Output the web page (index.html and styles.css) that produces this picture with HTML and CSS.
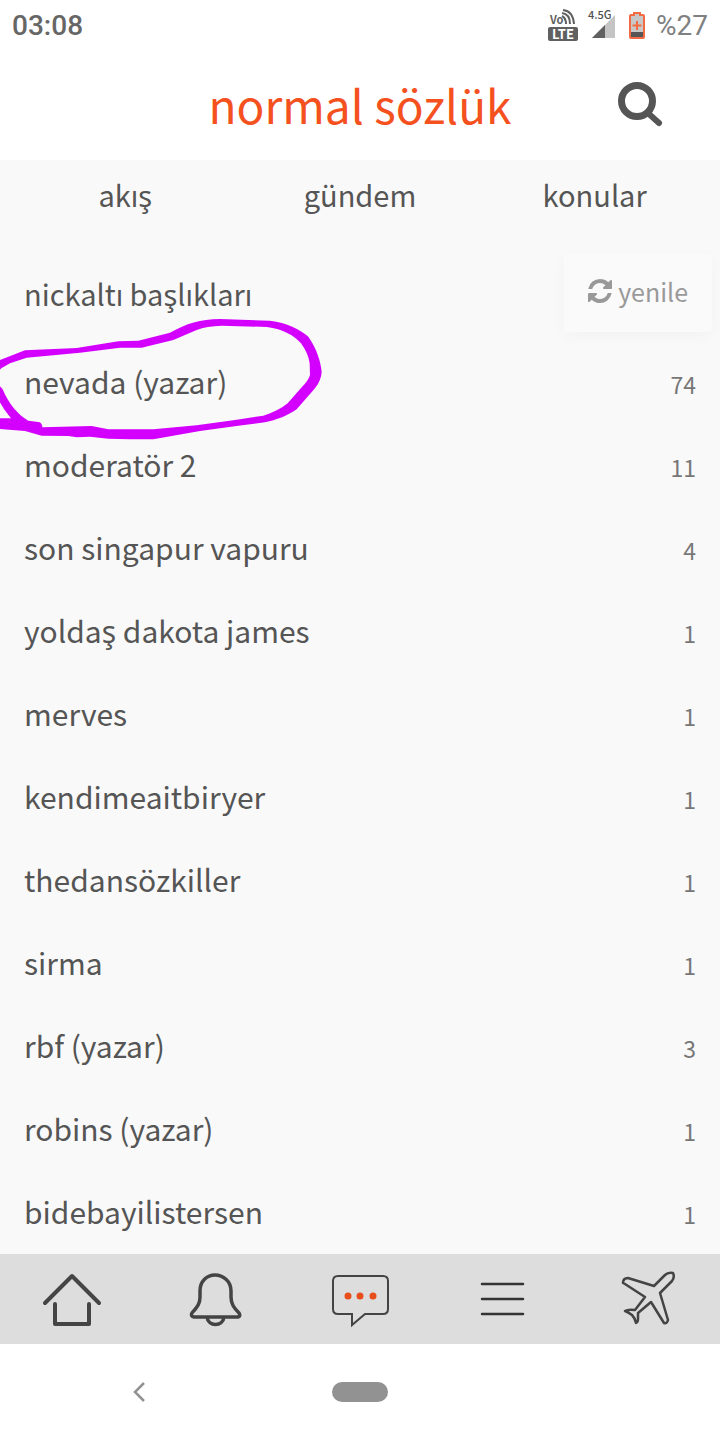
FILE: index.html
```html
<!DOCTYPE html>
<html lang="tr">
<head>
<meta charset="utf-8">
<meta name="viewport" content="width=device-width, initial-scale=1">
<title>normal sözlük</title>
<link rel="stylesheet" href="styles.css">
</head>
<body>
<div class="status">
  <span class="clock">03:08</span>
  <div class="indicators">
    <svg class="volte" width="30" height="32" viewBox="0 0 30 32" aria-label="VoLTE">
      <rect x="0" y="17" width="30" height="14" rx="2" fill="#606060"/>
      <text x="15" y="29" text-anchor="middle" font-size="13" font-weight="700" fill="#fff">LTE</text>
      <text x="2" y="14" font-size="11" font-weight="700" fill="#606060">Vo</text>
      <path d="M14 6q4 2 4 8M14 3q8 1 8 11M15 0q10 1 11 14" fill="none" stroke="#606060" stroke-width="2"/>
    </svg>
    <svg class="signal" width="28" height="32" viewBox="0 0 28 32" aria-label="4.5G">
      <path d="M27 5v23H4z" fill="#c4c4c4"/><path d="M17 15v13H4z" fill="#606060"/>
      <text x="0" y="9" font-size="11" font-weight="500" fill="#505050">4.5G</text>
    </svg>
    <svg class="battery" width="18" height="30" viewBox="0 0 18 30" aria-label="Pil">
      <path d="M3 4h3V2h6v2h3q1 0 1 1v21q0 1-1 1H3q-1 0-1-1V5q0-1 1-1z" fill="#c8c8c8" stroke="#f36b42" stroke-width="2"/>
      <path d="M3 21h12v5H3z" fill="#555"/><path d="M9 10v9M4.500 14.500h9" stroke="#f36b42" stroke-width="2"/>
    </svg>
    <span class="percent">%27</span>
  </div>
</div>
<header class="header">
  <h1 class="brand">normal sözlük</h1>
  <button class="search" type="button" aria-label="ara">
    <svg width="46" height="46" viewBox="0 0 46 46" fill="none" stroke="#555"><circle cx="20" cy="19" r="15.500" stroke-width="7"/><path d="M32 32l10 9" stroke-width="6" stroke-linecap="round"/></svg>
  </button>
</header>
<main class="content">
  <nav class="tabs"><a href="#akis">akış</a><a href="#gundem">gündem</a><a href="#konular">konular</a></nav>
  <div class="heading">
    <h2>nickaltı başlıkları</h2>
    <button class="refresh" type="button">
      <svg width="24" height="24" viewBox="0 0 1536 1536" fill="#999" aria-hidden="true"><path d="M1511 928q0 5-1 7-64 268-268 434.500T764 1536q-146 0-282.500-55T238 1324l-129 129q-19 19-45 19t-45-19-19-45V960q0-26 19-45t45-19h448q26 0 45 19t19 45-19 45l-137 137q71 66 161 102t187 36q134 0 250-65t186-179q11-17 53-117 8-23 30-23h192q13 0 22.500 9.500t9.500 22.500zm25-800v448q0 26-19 45t-45 19h-448q-26 0-45-19t-19-45 19-45l138-138Q969 256 768 256q-134 0-250 65T332 500q-11 17-53 117-8 23-30 23H50q-13 0-22.500-9.500T18 608v-7q65-268 270-434.500T768 0q146 0 284 55.500T1297 212l130-129q19-19 45-19t45 19 19 45z"/></svg>
      <span>yenile</span>
    </button>
  </div>
  <ul class="topics">
    <li><a href="#1">nevada (yazar)<small>74</small></a></li>
    <li><a href="#2">moderatör 2<small>11</small></a></li>
    <li><a href="#3">son singapur vapuru<small>4</small></a></li>
    <li><a href="#4">yoldaş dakota james<small>1</small></a></li>
    <li><a href="#5">merves<small>1</small></a></li>
    <li><a href="#6">kendimeaitbiryer<small>1</small></a></li>
    <li><a href="#7">thedansözkiller<small>1</small></a></li>
    <li><a href="#8">sirma<small>1</small></a></li>
    <li><a href="#9">rbf (yazar)<small>3</small></a></li>
    <li><a href="#10">robins (yazar)<small>1</small></a></li>
    <li><a href="#11">bidebayilistersen<small>1</small></a></li>
  </ul>
  <svg class="scribble" width="340" height="140" viewBox="0 0 1020 420" fill="#d400ff" aria-hidden="true">
    <path fill-rule="evenodd" d="M-20 158L75 121L230 114L355 94L415 92L510 68C560 40 600 28 660 27L810 32C860 38 900 58 925 80C950 115 962 155 965 185Q964 210 945 235L890 298C860 318 830 330 795 337L715 347L600 363L460 388L390 388L325 386L270 380L230 382L205 378L125 377L75 363L-20 355ZM-20 195L5 174L30 160L80 143L240 128L360 113L425 113L520 90L590 60Q620 48 665 47L800 51C850 58 880 75 903 100Q925 130 929 160L930 195Q925 212 905 232L863 280C840 298 815 310 790 317L705 330L590 346L460 358L325 358L275 348L127 352Q127 338 115 336L85 332C55 316 25 280 8 238L-3 225L-20 225ZM-20 324L33 325Q10 298-3 272L-20 270Z"/>
  </svg>
</main>
<nav class="toolbar">
  <a href="#home" aria-label="ana sayfa"><svg width="60" height="60" viewBox="0 0 60 60" fill="none" stroke="#444" stroke-width="4" stroke-linecap="round" stroke-linejoin="round"><path d="M3 34L30 7l27 27M13 35v20h34V35"/></svg></a>
  <a href="#alerts" aria-label="bildirimler"><svg width="60" height="60" viewBox="0 0 60 60" fill="none" stroke="#444" stroke-width="3.500" stroke-linejoin="round"><path d="M8 48Q4 47 6 44C11 38 14 35 14 28V22C14 12 21 6 29 6S45 12 45 22v6c0 7 3 11 8 16q2 3-1 4zM21 48c1 10 16 10 17 0"/></svg></a>
  <a href="#messages" aria-label="mesajlar"><svg width="60" height="60" viewBox="0 0 60 60" fill="none" stroke="#444" stroke-width="2"><path d="M8 7h45q5 0 5 5v28q0 5-5 5H35L22 56V45H8q-5 0-5-5V12q0-5 5-5z"/><g fill="#e84e1b" stroke="none"><circle cx="18" cy="27" r="3.500"/><circle cx="30" cy="27" r="3.500"/><circle cx="43" cy="27" r="3.500"/></g></svg></a>
  <a href="#menu" aria-label="menü"><svg width="60" height="60" viewBox="0 0 60 60" stroke="#333" stroke-width="2.500" stroke-linecap="round"><path d="M8 15h41M8 30h41M8 45h41"/></svg></a>
  <a href="#travel" aria-label="uçak"><svg width="60" height="60" viewBox="0 0 60 60" fill="none" stroke="#444" stroke-width="2.500" stroke-linejoin="round"><path d="M5 14Q5 9 10 9L36 17 47 6q3-3 8-2 2 4-1 8L42 24l8 27q-1 4-4 3L33 33 20 44v6q0 3-2 4-1-5-4-8-4-3-7-4 3-2 10-1L27 28 7 15z"/></svg></a>
</nav>
<div class="system">
  <button class="back" type="button" aria-label="geri"><svg width="14" height="22" viewBox="0 0 14 22" fill="none" stroke="#929292" stroke-width="2.500"><path d="M12 2L3 11l9 9"/></svg></button>
  <button class="pill" type="button" aria-label="ana ekran"></button>
</div>
</body>
</html>
```
FILE: styles.css
```css
* { box-sizing: border-box; }
body {
  margin: 0;
  background: #fff;
  color: #555;
  font-family: "Noto Sans CJK SC", "Noto Sans", sans-serif;
  font-size: 29px;
  line-height: 40px;
}
a { color: inherit; text-decoration: none; }
button { border: 0; padding: 0; background: none; color: inherit; font: inherit; }
svg { display: block; flex: none; overflow: visible; }
h1, h2, ul { margin: 0; padding: 0; font-weight: 400; }
.status {
  display: flex;
  justify-content: space-between;
  align-items: center;
  height: 50px;
  padding: 1px 12px 0;
  font-family: Roboto, sans-serif;
  font-size: 28px;
  font-weight: 500;
  color: #666;
}
.indicators { display: flex; align-items: center; gap: 10px; }
.indicators svg { font-family: "Noto Sans CJK SC", sans-serif; }
.battery { margin-left: 2px; }
.percent { font-weight: 400; color: #808080; }
.header {
  display: grid;
  grid-template-columns: 1fr auto 1fr;
  align-items: center;
  height: 110px;
}
.brand {
  grid-column: 2;
  padding-bottom: 3px;
  font-size: 46px;
  line-height: 64px;
  color: #f4511e;
}
.search { justify-self: end; margin-right: 57px; }
.content { position: relative; overflow: hidden; background: #f9f9f9; }
.tabs {
  display: grid;
  grid-template-columns: repeat(3, 1fr);
  height: 94px;
  padding: 14px 8px 0;
  text-align: center;
}
.heading {
  display: flex;
  justify-content: space-between;
  align-items: center;
  height: 78px;
  padding: 0 8px 0 24px;
}
.heading h2 { font-size: 29px; }
.refresh {
  display: flex;
  align-items: center;
  gap: 6px;
  height: 78px;
  padding: 0 24px 5px;
  border-radius: 4px;
  background: #fafafa;
  box-shadow: 0 4px 16px rgba(0, 0, 0, 0.03);
  color: #999;
  font-size: 25px;
}
.topics { padding-top: 9px; list-style: none; }
.topics a {
  display: flex;
  justify-content: space-between;
  align-items: center;
  height: 83px;
  padding: 0 24px 4px;
  font-size: 30px;
}
.topics small { padding-top: 6px; font-size: 23px; color: #777; }
.scribble { position: absolute; left: 0; top: 150px; pointer-events: none; }
.toolbar {
  display: grid;
  grid-template-columns: repeat(5, 1fr);
  height: 90px;
  background: #ddd;
}
.toolbar a { display: flex; align-items: center; justify-content: center; }
.system {
  display: grid;
  grid-template-columns: 1fr auto 1fr;
  align-items: center;
  height: 96px;
}
.back { justify-self: center; padding-right: 54px; }
.pill { width: 56px; height: 20px; border-radius: 10px; background: #929292; }
```
